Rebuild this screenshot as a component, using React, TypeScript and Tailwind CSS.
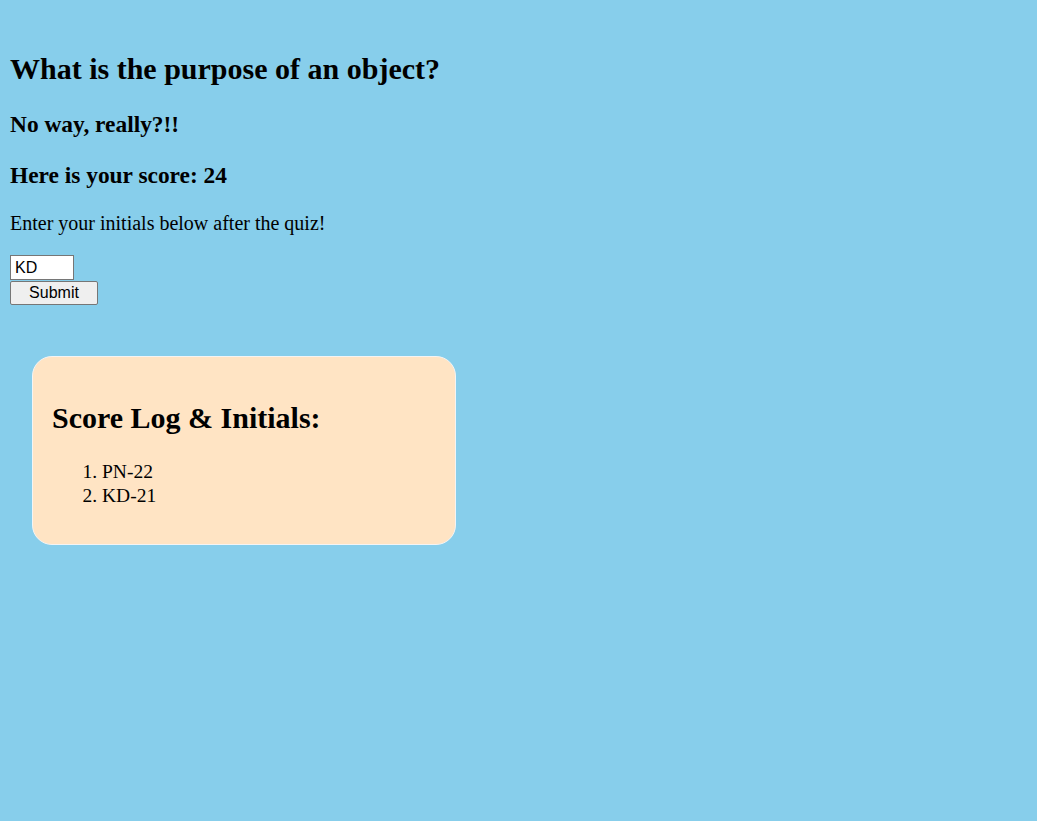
import React, { useState } from 'react';

const serif = "font-['Liberation_Serif','Times_New_Roman',serif]";

const App: React.FC = () => {
  const [initials, setInitials] = useState('KD');
  const scores = ['PN-22', 'KD-21'];

  return (
    <div className={`min-h-[821px] bg-[#87ceeb] text-black px-[10px] pt-[52px] ${serif}`}>
      <h1 className="text-[30px] font-bold leading-[normal]">What is the purpose of an object?</h1>
      <h2 className="mt-[25px] text-[23.4px] font-bold leading-[normal]">No way, really?!!</h2>
      <h2 className="mt-[24px] text-[23.4px] font-bold leading-[normal]">Here is your score: 24</h2>
      <p className="mt-[23px] text-[20px] leading-[normal]">Enter your initials below after the quiz!</p>

      <form className="mt-[20px] flex flex-col items-start" onSubmit={e => e.preventDefault()}>
        <input
          type="text"
          value={initials}
          onChange={e => setInitials(e.target.value)}
          className="w-[64px] h-[25px] bg-white border border-[#767676] px-[4px] text-[16px] leading-none font-['Liberation_Sans',Arial,sans-serif] outline-none"
        />
        <button
          type="submit"
          className="mt-px w-[88px] h-[24px] bg-[#efefef] border border-[#767676] rounded-[2px] text-[16px] leading-none font-['Liberation_Sans',Arial,sans-serif]"
        >
          Submit
        </button>
      </form>

      <div className="mt-[51px] ml-[22px] w-[424px] h-[189px] bg-[#ffe4c4] border border-[#f4f4f4] rounded-[20px] px-[19px] pt-[44px]">
        <h1 className="text-[30px] font-bold leading-[normal]">Score Log &amp; Initials:</h1>
        <ol className="mt-[25px] list-decimal pl-[50px] text-[19.5px] leading-[24px]">
          {scores.map(s => (
            <li key={s}>{s}</li>
          ))}
        </ol>
      </div>
    </div>
  );
};

export default App;
